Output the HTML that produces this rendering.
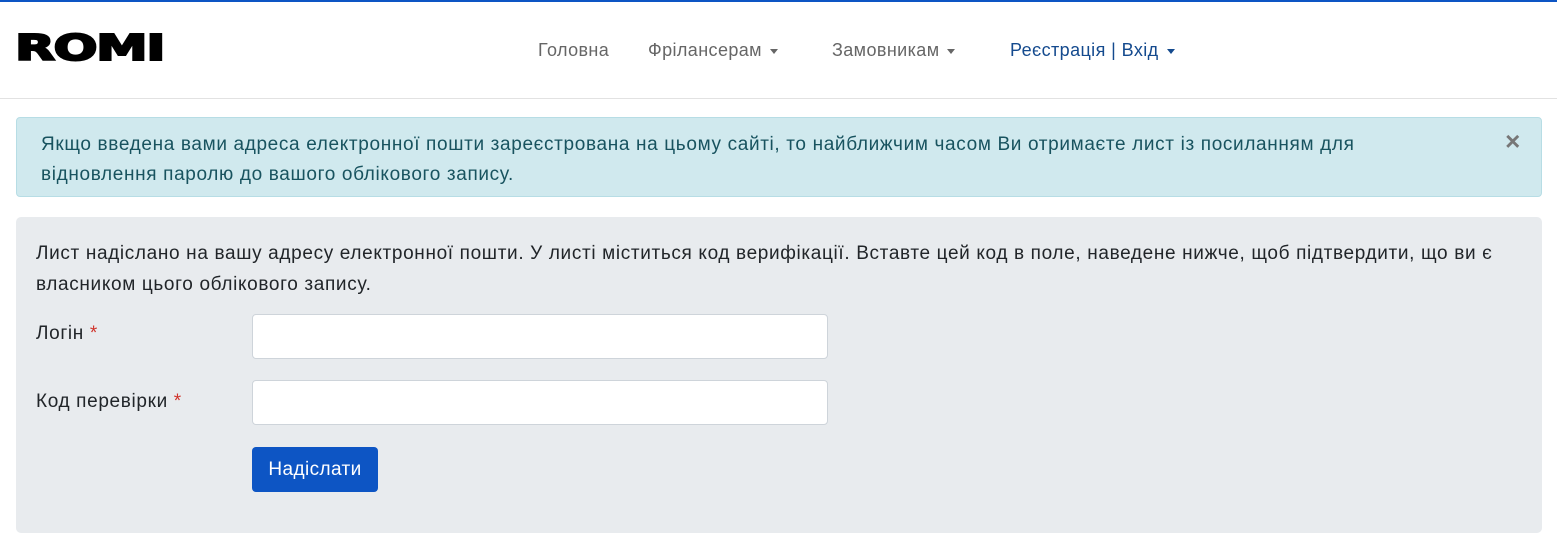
<!DOCTYPE html>
<html><head><meta charset="utf-8"><style>
*{box-sizing:border-box}
body{margin:0;width:1557px;height:538px;overflow:hidden;background:#fff;font-family:"Liberation Sans","DejaVu Sans",sans-serif;font-size:19px;letter-spacing:0.65px;color:#212529}
.top{height:2px;background:#0d55c4}
header{height:97px;border-bottom:1px solid #e2e2e2;position:relative}
.logo{position:absolute;left:15px;top:31px;font-family:"DejaVu Sans",sans-serif;font-weight:900;font-size:36px;letter-spacing:-1px;line-height:32px;transform:scale(1.44,1.0);transform-origin:top left;color:#000;-webkit-text-stroke:2px #000}
nav a{position:absolute;top:38px;font-size:18px;letter-spacing:0.4px;color:#666;text-decoration:none;white-space:nowrap}
.car{display:inline-block;width:0;height:0;border-left:4px solid transparent;border-right:4px solid transparent;border-top:5px solid currentColor;vertical-align:middle;margin-left:8px}
.alert{position:absolute;left:16px;top:117px;width:1526px;height:80px;background:#d0e9ee;border:1px solid #b7dde5;border-radius:4px;color:#18535f;padding:12px 24px;line-height:30px}
.x{position:absolute;right:20px;top:8px;font-size:26px;font-weight:bold;color:#777}
.card{position:absolute;left:16px;top:217px;width:1526px;height:316px;background:#e8ebee;border-radius:5px;padding:21px 20px;line-height:31px}
label{position:absolute;left:20px}
.req{color:#d0342c}
input{position:absolute;left:236px;width:576px;height:45px;border:1px solid #ced4da;border-radius:4px;background:#fff}
button{position:absolute;left:236px;top:230px;width:126px;height:45px;background:#0d55c4;color:#fff;border:0;border-radius:4px;font-family:inherit;font-size:19px;letter-spacing:0.4px}
</style></head><body>
<div class="top"></div>
<header>
<div class="logo">ROMI</div>
<nav>
<a style="left:538px">Головна</a>
<a style="left:648px">Фрілансерам<span class="car"></span></a>
<a style="left:832px">Замовникам<span class="car"></span></a>
<a style="left:1010px;color:#144a8e">Реєстрація | Вхід<span class="car"></span></a>
</nav>
</header>
<div class="alert">Якщо введена вами адреса електронної пошти зареєстрована на цьому сайті, то найближчим часом Ви отримаєте лист із посиланням для<br>відновлення паролю до вашого облікового запису.<span class="x">×</span></div>
<div class="card">Лист надіслано на вашу адресу електронної пошти. У листі міститься код верифікації. Вставте цей код в поле, наведене нижче, щоб підтвердити, що ви є<br>власником цього облікового запису.
<label style="top:101px">Логін <span class="req">*</span></label>
<input style="top:97px">
<label style="top:169px">Код перевірки <span class="req">*</span></label>
<input style="top:163px">
<button>Надіслати</button>
</div>
</body></html>
